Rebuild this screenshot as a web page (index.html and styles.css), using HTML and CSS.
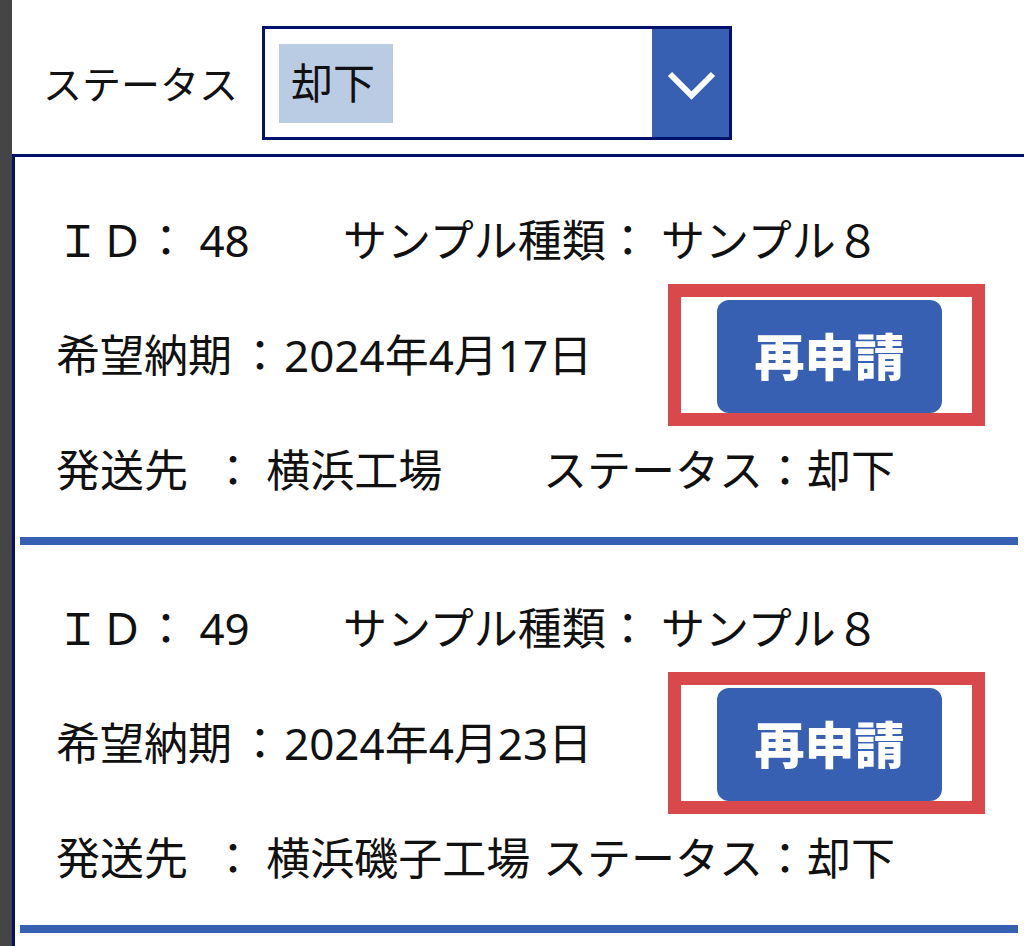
FILE: index.html
```html
<!DOCTYPE html>
<html lang="ja">
<head>
<meta charset="utf-8">
<title>却下一覧</title>
<link rel="stylesheet" href="styles.css">
</head>
<body>
<div class="app">
  <div class="sidebar"></div>
  <div class="main">
    <header class="filter">
      <span class="filter-label">ステータス</span>
      <div class="dropdown">
        <div class="dropdown-value"><span class="chip">却下</span></div>
        <div class="dropdown-toggle">
          <svg width="77" height="108" viewBox="0 0 77 108" aria-hidden="true">
            <polyline points="18,45 39.5,66.5 61,45" fill="none" stroke="#ffffff" stroke-width="6"/>
          </svg>
        </div>
      </div>
    </header>
    <section class="gallery">
      <article class="card">
        <div class="card-body">
          <div class="row">
            <span class="id">ＩＤ： 48</span>
            <span class="kind">サンプル種類： サンプル８</span>
          </div>
          <div class="row">
            <span class="date">希望納期<span class="colon">：</span>2024年4月17日</span>
            <div class="highlight"><button class="reapply">再申請</button></div>
          </div>
          <div class="row">
            <span class="dest">発送先  ： 横浜工場</span>
            <span class="status">ステータス：却下</span>
          </div>
        </div>
        <div class="separator"></div>
      </article>
      <article class="card">
        <div class="card-body">
          <div class="row">
            <span class="id">ＩＤ： 49</span>
            <span class="kind">サンプル種類： サンプル８</span>
          </div>
          <div class="row">
            <span class="date">希望納期<span class="colon">：</span>2024年4月23日</span>
            <div class="highlight"><button class="reapply">再申請</button></div>
          </div>
          <div class="row">
            <span class="dest">発送先  ： 横浜磯子工場</span>
            <span class="status">ステータス：却下</span>
          </div>
        </div>
        <div class="separator"></div>
      </article>
    </section>
  </div>
</div>
</body>
</html>
```
FILE: styles.css
```css
* { box-sizing: border-box; }
html, body { margin: 0; padding: 0; background: #ffffff; }
body {
  font-family: "Noto Sans", "Noto Sans CJK JP", sans-serif;
  color: #111111;
}
.app {
  display: flex;
  height: 946px;
  overflow: hidden;
}
.sidebar {
  width: 12px;
  flex: none;
  background: #454545;
}
.main {
  flex: 1;
  display: flex;
  flex-direction: column;
  min-width: 0;
}
.filter {
  height: 154px;
  flex: none;
  display: flex;
  align-items: center;
  padding: 12px 0 0 31px;
  gap: 24px;
}
.filter-label {
  font-size: 39px;
  line-height: 1;
  white-space: nowrap;
}
.dropdown {
  width: 470px;
  height: 114px;
  border: 3px solid #00126b;
  display: flex;
  background: #ffffff;
}
.dropdown-value {
  flex: 1;
  display: flex;
  align-items: center;
  padding-left: 14px;
}
.chip {
  width: 114px;
  height: 79px;
  background: #bacbe4;
  display: flex;
  align-items: center;
  padding-left: 12px;
  font-size: 42px;
  line-height: 1;
  color: #111111;
}
.dropdown-toggle {
  width: 77px;
  flex: none;
  background: #3860b2;
  display: flex;
}
.gallery {
  flex: 1;
  border-top: 3px solid #00126b;
  border-left: 3px solid #00126b;
}
.card-body {
  padding: 25px 39px 10px 41px;
}
.row {
  height: 115px;
  display: flex;
  align-items: center;
  font-size: 44px;
  line-height: 1;
  white-space: pre;
}
.id { width: 287px; flex: none; }
.date { flex: 1; }
.colon { margin: 0 2px 0 6px; }
.dest { width: 487px; flex: none; }
.highlight {
  flex: none;
  border: 13px solid #d9484b;
  padding: 3px 30px 0 36px;
  height: 142px;
}
.reapply {
  display: block;
  width: 225px;
  height: 113px;
  border: none;
  border-radius: 12px;
  background: #3860b2;
  color: #ffffff;
  font-family: "Noto Sans CJK JP", sans-serif;
  font-weight: 900;
  font-size: 50px;
  line-height: 1;
  padding: 0 0 4px 0;
}
.separator {
  height: 8px;
  margin: 0 6px 0 5px;
  background: #3860b2;
}
```
